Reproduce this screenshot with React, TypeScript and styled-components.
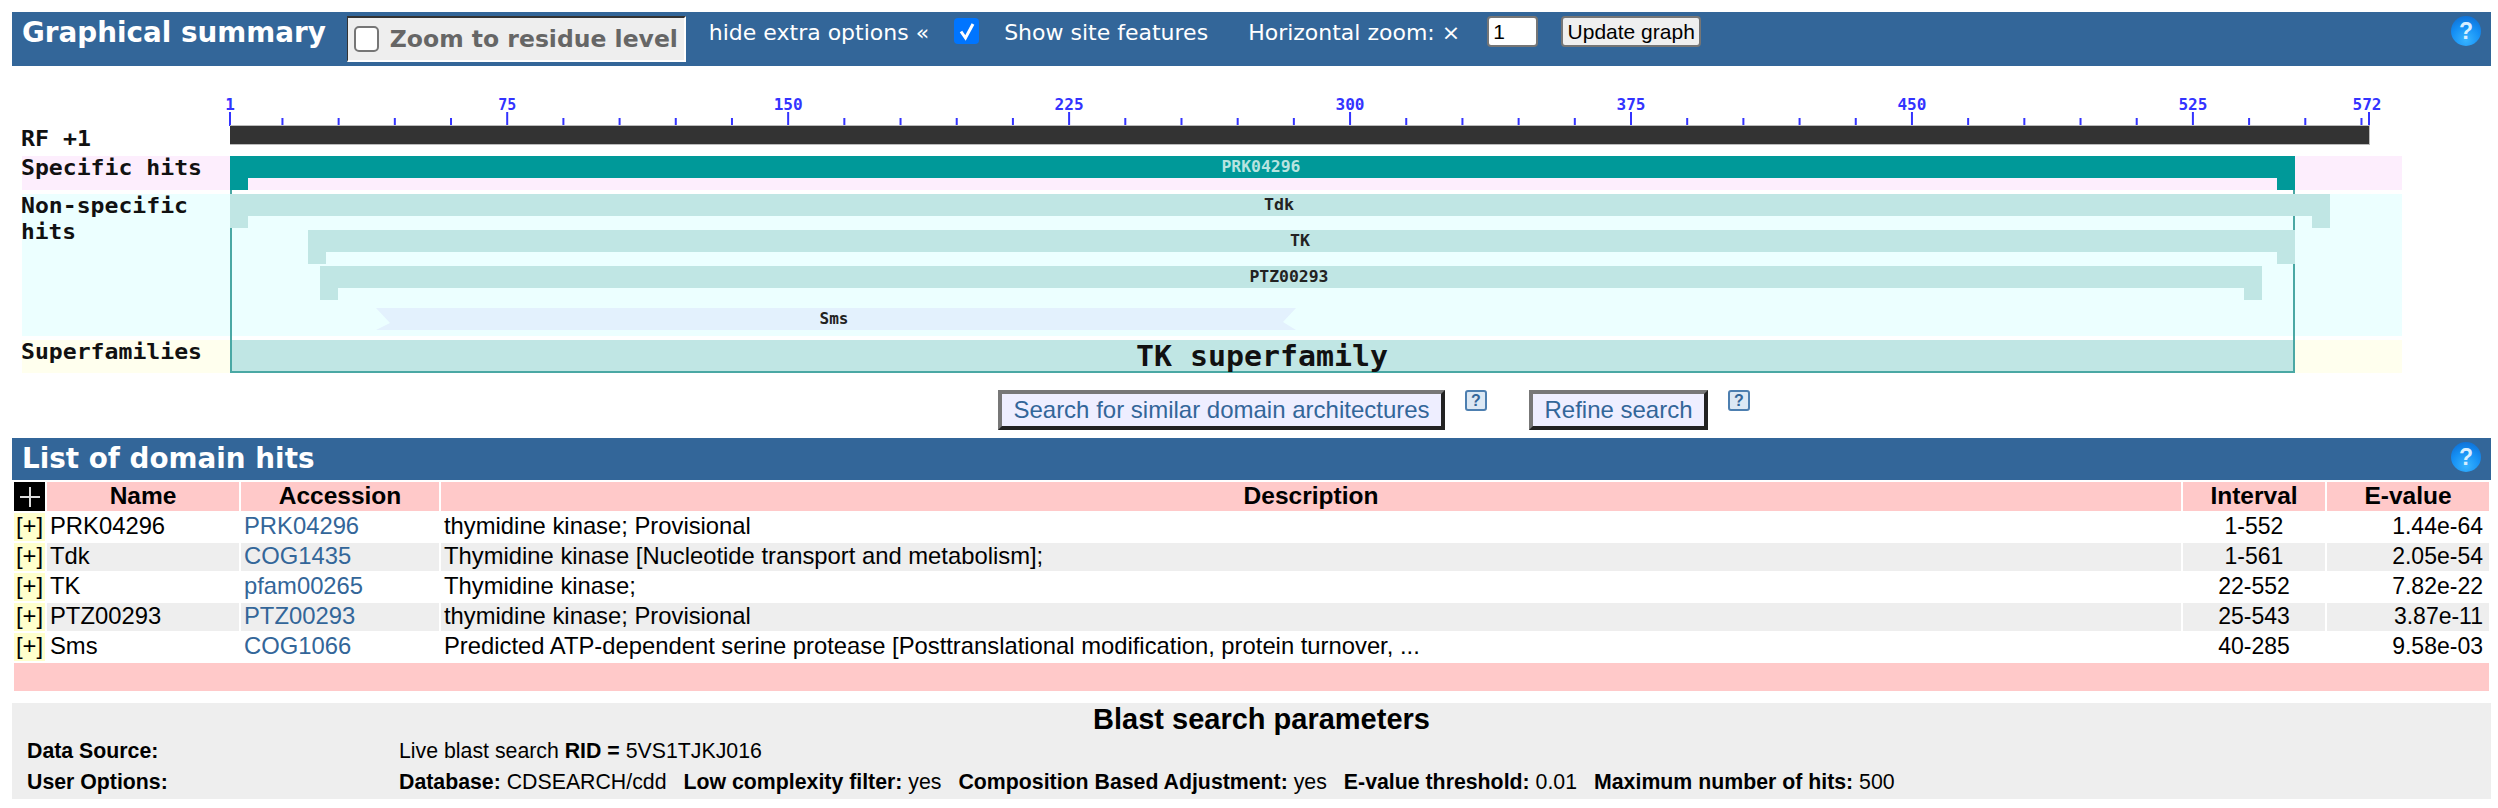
import React from 'react'
import styled, { createGlobalStyle } from 'styled-components'

const GlobalStyle = createGlobalStyle`
  html, body {
    margin: 0;
    padding: 0;
    background: #ffffff;
    font-family: 'Liberation Sans', Arial, sans-serif;
  }
`

const Page = styled.div`
  width: 2498px;
  height: 808px;
  padding: 12px 7px 0 12px;
  box-sizing: border-box;
  overflow: hidden;
`

const SectionBar = styled.div<{ $height: number }>`
  display: flex;
  align-items: flex-start;
  height: ${props => props.$height}px;
  background: #336699;
  color: #ffffff;
  padding-left: 10px;
  padding-right: 10px;
  box-sizing: border-box;
`

const BarTitle = styled.div`
  font-family: 'DejaVu Sans', Verdana, sans-serif;
  font-weight: 700;
  font-size: 27.8px;
  line-height: 42px;
  white-space: nowrap;
`

const ZoomLabel = styled.label`
  display: flex;
  align-items: center;
  width: 339px;
  height: 46px;
  margin: 4px 23px 0 21px;
  padding-left: 6px;
  box-sizing: border-box;
  background: #eeeeee;
  border-top: 2px solid #333333;
  border-left: 1px solid #333333;
  border-right: 2px solid #ffffff;
  border-bottom: 2px solid #ffffff;
  color: #666666;
  font-family: 'DejaVu Sans', Verdana, sans-serif;
  font-weight: 700;
  font-size: 23.5px;
  white-space: nowrap;
`

const PlainBox = styled.span`
  display: block;
  width: 25px;
  height: 26px;
  margin-right: 11px;
  flex: none;
  box-sizing: border-box;
  background: #ffffff;
  border: 2px solid #767676;
  border-radius: 5px;
`

const BarText = styled.span<{ $left?: number }>`
  margin-left: ${props => props.$left || 0}px;
  font-family: 'DejaVu Sans', Verdana, sans-serif;
  font-size: 22px;
  line-height: 42px;
  white-space: nowrap;
`

const CheckedBox = styled.span`
  display: flex;
  align-items: center;
  justify-content: center;
  width: 25px;
  height: 26px;
  margin: 6px 25px 0 25px;
  flex: none;
  background: #0075ff;
  border-radius: 4px;
`

const ZoomInput = styled.input`
  width: 51px;
  height: 31px;
  margin: 4px 23px 0 27px;
  padding: 0 0 0 4px;
  box-sizing: border-box;
  background: #ffffff;
  border: 2px solid #767676;
  border-radius: 4px;
  color: #000000;
  font-family: 'Liberation Sans', Arial, sans-serif;
  font-size: 21px;
`

const UpdateButton = styled.button`
  width: 140px;
  height: 31px;
  margin-top: 4px;
  padding: 0;
  background: #efefef;
  border: 2px solid #767676;
  border-radius: 4px;
  color: #000000;
  font-family: 'Liberation Sans', Arial, sans-serif;
  font-size: 21px;
  white-space: nowrap;
`

const HelpBadge = styled.span`
  display: flex;
  align-items: center;
  justify-content: center;
  width: 30px;
  height: 30px;
  margin-left: auto;
  margin-top: 4px;
  flex: none;
  border-radius: 50%;
  background: radial-gradient(circle at 50% 80%, #38b4ff 0%, #1590f5 50%, #0c66cc 100%);
  color: #d8efff;
  font-family: 'Liberation Sans', Arial, sans-serif;
  font-weight: 700;
  font-size: 23px;
`

const GraphSvg = styled.svg`
  display: block;
  width: 2420px;
  height: 324px;
  font-family: 'DejaVu Sans Mono', 'Liberation Mono', monospace;
`

const ActionRow = styled.div`
  display: flex;
  align-items: flex-start;
  height: 48px;
  padding-left: 986px;
`

const ActionButton = styled.a<{ $width: number }>`
  display: flex;
  align-items: center;
  justify-content: center;
  width: ${props => props.$width}px;
  height: 40px;
  box-sizing: border-box;
  background: #eeeeff;
  border-style: solid;
  border-width: 4px;
  border-color: #777777 #222222 #222222 #777777;
  color: #336699;
  font-size: 24px;
  white-space: nowrap;
`

const SmallHelp = styled.span<{ $after: number }>`
  display: flex;
  align-items: center;
  justify-content: center;
  width: 22px;
  height: 21px;
  margin-left: 20px;
  margin-right: ${props => props.$after}px;
  box-sizing: border-box;
  background: #dce8f4;
  border: 2px solid #4d7fb0;
  border-radius: 3px;
  color: #336699;
  font-size: 16px;
  font-weight: 700;
`

const HitsTable = styled.table`
  width: 2479px;
  border-collapse: separate;
  border-spacing: 2px;
  table-layout: fixed;
  font-size: 23.8px;
  color: #000000;
`

const Col = styled.col<{ $width?: number }>`
  width: ${props => (props.$width ? `${props.$width}px` : 'auto')};
`

const HeadCell = styled.th`
  height: 28px;
  padding: 0 0 1px;
  box-sizing: border-box;
  background: #ffc9c9;
  font-size: 24.5px;
  font-weight: 700;
  text-align: center;
`

const CornerCell = styled.th`
  height: 28px;
  padding: 0;
  background: #000000;
  vertical-align: middle;
`

const CornerPlus = styled.svg`
  display: block;
  margin: auto;
`

const HitRow = styled.tr<{ $shaded: boolean }>`
  td {
    background: ${props => (props.$shaded ? '#eeeeee' : '#ffffff')};
  }
`

const Cell = styled.td`
  height: 28px;
  padding: 0 3px;
  line-height: 26px;
  vertical-align: top;
  white-space: nowrap;
  overflow: hidden;
`

const IntervalCell = styled(Cell)`
  font-size: 23px;
  text-align: center;
`

const EvalueCell = styled(Cell)`
  padding-right: 6px;
  font-size: 23px;
  text-align: right;
`

const ToggleCell = styled.td`
  height: 28px;
  padding: 0;
  background: #ffffcc !important;
  line-height: 26px;
  vertical-align: top;
  text-align: center;
`

const HitLink = styled.a`
  color: #336699;
`

const FooterCell = styled.td`
  height: 28px;
  padding: 0;
  background: #ffc9c9;
`

const ParamsPanel = styled.div`
  width: 2479px;
  height: 96px;
  margin-top: 10px;
  padding: 0 15px;
  box-sizing: border-box;
  background: #eeeeee;
  color: #000000;
`

const ParamsTitle = styled.div`
  height: 33px;
  padding-left: 20px;
  font-size: 29px;
  font-weight: 700;
  line-height: 32px;
  text-align: center;
`

const ParamRow = styled.div`
  display: grid;
  grid-template-columns: 372px 1fr;
  height: 31px;
  font-size: 21.3px;
  line-height: 31px;
  white-space: nowrap;
`

const ParamOption = styled.span`
  margin-right: 17px;
`

const residueX = (residue: number): number => 230 + (residue - 1) * 3.746

const ticks: number[] = [1]
for (let r = 15; r <= 570; r += 15) ticks.push(r)
const labels = [75, 150, 225, 300, 375, 450, 525]

const bands = [
  { y: 156, height: 34, fill: '#fdeefd' },
  { y: 194, height: 142, fill: '#ecffff' },
  { y: 340, height: 33, fill: '#ffffee' },
]

const rowLabels = [
  { text: 'Specific hits', y: 175, width: 181 },
  { text: 'Non-specific', y: 213, width: 167 },
  { text: 'hits', y: 239, width: 55 },
  { text: 'Superfamilies', y: 359, width: 181 },
]

const hits = [
  { name: 'PRK04296', x1: 230, x2: 2295, y: 156, fill: '#009999', text: '#b8e4e0', textX: 1261, width: 79 },
  { name: 'Tdk', x1: 230, x2: 2330, y: 194, fill: '#c0e6e4', text: '#222222', textX: 1279, width: 30 },
  { name: 'TK', x1: 308, x2: 2295, y: 230, fill: '#c0e6e4', text: '#222222', textX: 1300, width: 20 },
  { name: 'PTZ00293', x1: 320, x2: 2262, y: 266, fill: '#c0e6e4', text: '#222222', textX: 1289, width: 79 },
]

const tableRows = [
  { name: 'PRK04296', accession: 'PRK04296', description: 'thymidine kinase; Provisional', interval: '1-552', evalue: '1.44e-64' },
  { name: 'Tdk', accession: 'COG1435', description: 'Thymidine kinase [Nucleotide transport and metabolism];', interval: '1-561', evalue: '2.05e-54' },
  { name: 'TK', accession: 'pfam00265', description: 'Thymidine kinase;', interval: '22-552', evalue: '7.82e-22' },
  { name: 'PTZ00293', accession: 'PTZ00293', description: 'thymidine kinase; Provisional', interval: '25-543', evalue: '3.87e-11' },
  { name: 'Sms', accession: 'COG1066', description: 'Predicted ATP-dependent serine protease [Posttranslational modification, protein turnover, ...', interval: '40-285', evalue: '9.58e-03' },
]

const DomainGraph: React.FC = () => (
  <GraphSvg viewBox="12 66 2420 324">
    <text x="21" y="146" fontSize="22" fontWeight="700" fill="#111" textLength="70" lengthAdjust="spacingAndGlyphs">RF +1</text>
    {labels.map(l => (
      <text key={l} x={residueX(l)} y="110" fontSize="16" fontWeight="700" fill="#3333ff" textAnchor="middle" textLength={l < 100 ? 18 : 29} lengthAdjust="spacingAndGlyphs">{l}</text>
    ))}
    <text x="230" y="110" fontSize="16" fontWeight="700" fill="#3333ff" textAnchor="middle">1</text>
    <text x="2367" y="110" fontSize="16" fontWeight="700" fill="#3333ff" textAnchor="middle" textLength="29" lengthAdjust="spacingAndGlyphs">572</text>
    {ticks.map(t => (
      <rect key={t} x={residueX(t) - 1} y={t % 75 === 0 || t === 1 ? 112 : 118} width="2" height={t % 75 === 0 || t === 1 ? 14 : 8} fill="#3333ff" />
    ))}
    <rect x="2368" y="112" width="2" height="14" fill="#3333ff" />
    <rect x="230" y="125" width="2140" height="20" fill="#bbbbbb" />
    <rect x="230" y="126" width="2139" height="18" fill="#333333" />

    {bands.map(b => (
      <rect key={b.y} x="22" y={b.y} width="2380" height={b.height} fill={b.fill} />
    ))}
    {rowLabels.map(l => (
      <text key={l.text} x="21" y={l.y} fontSize="22" fontWeight="700" fill="#111" textLength={l.width} lengthAdjust="spacingAndGlyphs">{l.text}</text>
    ))}

    <rect x="230" y="340" width="2065" height="32" fill="#c0e6e4" />
    <path d="M231 178V372H2294V178" fill="none" stroke="#4aa8a4" strokeWidth="2" />

    {hits.map(h => (
      <g key={h.name}>
        <path d={`M${h.x1} ${h.y}H${h.x2}V${h.y + 34}H${h.x2 - 18}V${h.y + 22}H${h.x1 + 18}V${h.y + 34}H${h.x1}Z`} fill={h.fill} />
        <text x={h.textX} y={h.y + 16} fontSize="15" fontWeight="700" fill={h.text} textAnchor="middle" textLength={h.width} lengthAdjust="spacingAndGlyphs">{h.name}</text>
      </g>
    ))}
    <path d="M376 308H1296L1283 322L1296 330H376L390 323Z" fill="#e3f1fd" />
    <text x="834" y="324" fontSize="15" fontWeight="700" fill="#222222" textAnchor="middle" textLength="29" lengthAdjust="spacingAndGlyphs">Sms</text>
    <text x="1262" y="366" fontSize="29" fontWeight="700" fill="#111111" textAnchor="middle" textLength="252" lengthAdjust="spacingAndGlyphs">TK superfamily</text>
  </GraphSvg>
)

const App: React.FC = () => (
  <Page>
    <GlobalStyle />
    <SectionBar $height={54}>
      <BarTitle>Graphical summary</BarTitle>
      <ZoomLabel>
        <PlainBox />
        Zoom to residue level
      </ZoomLabel>
      <BarText>hide extra options «</BarText>
      <CheckedBox>
        <svg width="18" height="20" viewBox="0 0 18 20">
          <path d="M3 10.5L7.5 17L15 3" fill="none" stroke="#ffffff" strokeWidth="3" />
        </svg>
      </CheckedBox>
      <BarText>Show site features</BarText>
      <BarText $left={40}>Horizontal zoom: ×</BarText>
      <ZoomInput defaultValue="1" />
      <UpdateButton>Update graph</UpdateButton>
      <HelpBadge>?</HelpBadge>
    </SectionBar>

    <DomainGraph />

    <ActionRow>
      <ActionButton $width={447}>Search for similar domain architectures</ActionButton>
      <SmallHelp $after={42}>?</SmallHelp>
      <ActionButton $width={179}>Refine search</ActionButton>
      <SmallHelp $after={0}>?</SmallHelp>
    </ActionRow>

    <SectionBar $height={42}>
      <BarTitle>List of domain hits</BarTitle>
      <HelpBadge>?</HelpBadge>
    </SectionBar>

    <HitsTable>
      <colgroup>
        <Col $width={31} />
        <Col $width={192} />
        <Col $width={198} />
        <Col />
        <Col $width={142} />
        <Col $width={162} />
      </colgroup>
      <thead>
        <tr>
          <CornerCell>
            <CornerPlus width="24" height="24" viewBox="0 0 24 24">
              <path d="M12 2V22M2 12H22" stroke="#dddddd" strokeWidth="2" />
            </CornerPlus>
          </CornerCell>
          <HeadCell>Name</HeadCell>
          <HeadCell>Accession</HeadCell>
          <HeadCell>Description</HeadCell>
          <HeadCell>Interval</HeadCell>
          <HeadCell>E-value</HeadCell>
        </tr>
      </thead>
      <tbody>
        {tableRows.map((row, i) => (
          <HitRow key={row.name} $shaded={i % 2 === 1}>
            <ToggleCell>[+]</ToggleCell>
            <Cell>{row.name}</Cell>
            <Cell><HitLink>{row.accession}</HitLink></Cell>
            <Cell>{row.description}</Cell>
            <IntervalCell>{row.interval}</IntervalCell>
            <EvalueCell>{row.evalue}</EvalueCell>
          </HitRow>
        ))}
        <tr>
          <FooterCell colSpan={6} />
        </tr>
      </tbody>
    </HitsTable>

    <ParamsPanel>
      <ParamsTitle>Blast search parameters</ParamsTitle>
      <ParamRow>
        <b>Data Source:</b>
        <span>Live blast search <b>RID =</b> 5VS1TJKJ016</span>
      </ParamRow>
      <ParamRow>
        <b>User Options:</b>
        <span>
          <ParamOption><b>Database:</b> CDSEARCH/cdd</ParamOption>
          <ParamOption><b>Low complexity filter:</b> yes</ParamOption>
          <ParamOption><b>Composition Based Adjustment:</b> yes</ParamOption>
          <ParamOption><b>E-value threshold:</b> 0.01</ParamOption>
          <ParamOption><b>Maximum number of hits:</b> 500</ParamOption>
        </span>
      </ParamRow>
    </ParamsPanel>
  </Page>
)

export default App
